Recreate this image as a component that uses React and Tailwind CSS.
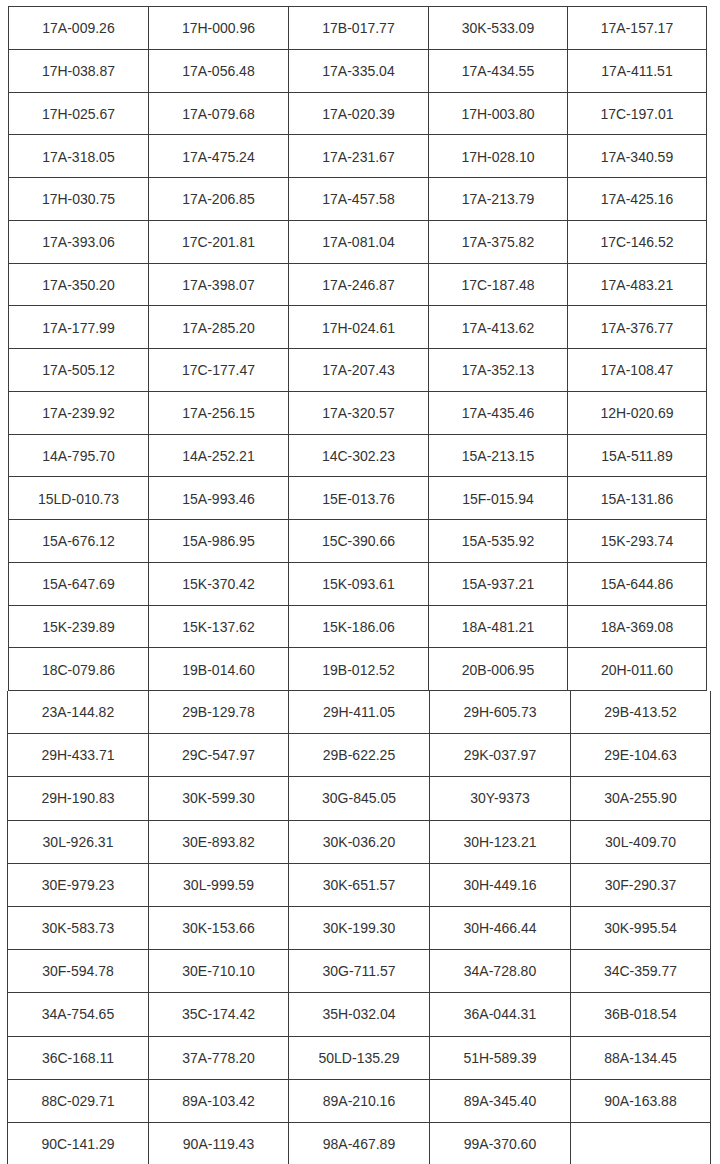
import React from "react";

const top = [
  ["17A-009.26", "17H-000.96", "17B-017.77", "30K-533.09", "17A-157.17"],
  ["17H-038.87", "17A-056.48", "17A-335.04", "17A-434.55", "17A-411.51"],
  ["17H-025.67", "17A-079.68", "17A-020.39", "17H-003.80", "17C-197.01"],
  ["17A-318.05", "17A-475.24", "17A-231.67", "17H-028.10", "17A-340.59"],
  ["17H-030.75", "17A-206.85", "17A-457.58", "17A-213.79", "17A-425.16"],
  ["17A-393.06", "17C-201.81", "17A-081.04", "17A-375.82", "17C-146.52"],
  ["17A-350.20", "17A-398.07", "17A-246.87", "17C-187.48", "17A-483.21"],
  ["17A-177.99", "17A-285.20", "17H-024.61", "17A-413.62", "17A-376.77"],
  ["17A-505.12", "17C-177.47", "17A-207.43", "17A-352.13", "17A-108.47"],
  ["17A-239.92", "17A-256.15", "17A-320.57", "17A-435.46", "12H-020.69"],
  ["14A-795.70", "14A-252.21", "14C-302.23", "15A-213.15", "15A-511.89"],
  ["15LD-010.73", "15A-993.46", "15E-013.76", "15F-015.94", "15A-131.86"],
  ["15A-676.12", "15A-986.95", "15C-390.66", "15A-535.92", "15K-293.74"],
  ["15A-647.69", "15K-370.42", "15K-093.61", "15A-937.21", "15A-644.86"],
  ["15K-239.89", "15K-137.62", "15K-186.06", "18A-481.21", "18A-369.08"],
  ["18C-079.86", "19B-014.60", "19B-012.52", "20B-006.95", "20H-011.60"],
];

const bottom = [
  ["23A-144.82", "29B-129.78", "29H-411.05", "29H-605.73", "29B-413.52"],
  ["29H-433.71", "29C-547.97", "29B-622.25", "29K-037.97", "29E-104.63"],
  ["29H-190.83", "30K-599.30", "30G-845.05", "30Y-9373", "30A-255.90"],
  ["30L-926.31", "30E-893.82", "30K-036.20", "30H-123.21", "30L-409.70"],
  ["30E-979.23", "30L-999.59", "30K-651.57", "30H-449.16", "30F-290.37"],
  ["30K-583.73", "30K-153.66", "30K-199.30", "30H-466.44", "30K-995.54"],
  ["30F-594.78", "30E-710.10", "30G-711.57", "34A-728.80", "34C-359.77"],
  ["34A-754.65", "35C-174.42", "35H-032.04", "36A-044.31", "36B-018.54"],
  ["36C-168.11", "37A-778.20", "50LD-135.29", "51H-589.39", "88A-134.45"],
  ["88C-029.71", "89A-103.42", "89A-210.16", "89A-345.40", "90A-163.88"],
  ["90C-141.29", "90A-119.43", "98A-467.89", "99A-370.60", ""],
];

export default function App() {
  return (
    <div
      className="w-[720px] h-[1164px] overflow-hidden bg-white text-[14px] text-[#333333]"
      style={{ fontFamily: '"Liberation Sans", Arial, sans-serif' }}
    >
      <div className="pt-[6px] pl-[8px]">
        <div className="grid grid-cols-[140px_140px_140px_139px_139px] w-[699px] border-l border-t border-[#3c3c3c]">
          {top.flat().map((t, i) => (
            <div
              key={i}
              className="h-[42.75px] pt-[2px] flex items-center justify-center border-r border-b border-[#3c3c3c]"
            >
              {t}
            </div>
          ))}
        </div>
      </div>
      <div className="pl-[7px]">
        <div className="grid grid-cols-[141px_140px_141px_141px_140px] w-[704px] border-l border-[#3c3c3c]">
          {bottom.flat().map((t, i) => (
            <div
              key={i}
              className="h-[43.2px] pt-[1px] flex items-center justify-center border-r border-b border-[#3c3c3c]"
            >
              {t}
            </div>
          ))}
        </div>
      </div>
    </div>
  );
}
